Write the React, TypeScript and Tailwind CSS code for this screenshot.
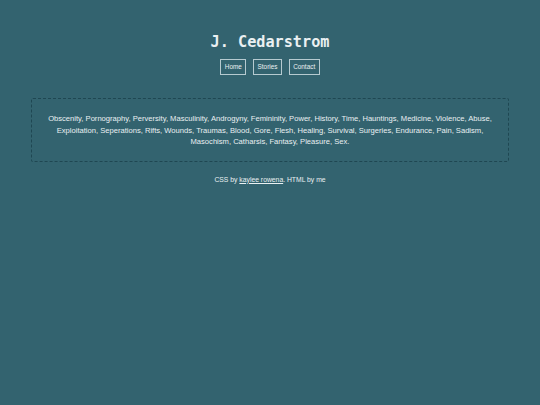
import React from 'react';

const links = ['Home', 'Stories', 'Contact'];

const tags =
  'Obscenity, Pornography, Perversity, Masculinity, Androgyny, Femininity, Power, History, Time, Hauntings, Medicine, Violence, Abuse, Exploitation, Seperations, Rifts, Wounds, Traumas, Blood, Gore, Flesh, Healing, Survival, Surgeries, Endurance, Pain, Sadism, Masochism, Catharsis, Fantasy, Pleasure, Sex.';

export default function App() {
  return (
    <div className="min-h-[405px] w-full bg-[#33636f] text-[#eaf0f2] font-['Liberation_Sans',Arial,sans-serif]">
      <header className="flex flex-col items-center pt-[32px]">
        <h1 className="font-['DejaVu_Sans_Mono',monospace] font-bold text-[15.2px] leading-[20px] tracking-normal">
          J. Cedarstrom
        </h1>
        <nav className="flex gap-[6.5px] mt-[7px]">
          {links.map((l) => (
            <a
              key={l}
              href="#"
              className="border border-[#b6cad0] px-[3.6px] h-[16px] flex items-center text-[6.4px] leading-none"
            >
              {l}
            </a>
          ))}
        </nav>
      </header>

      <section className="mx-[31px] mt-[23px] border border-dashed border-[#1f4752] rounded-[2px] px-[14px] pt-[14px] pb-[13px]">
        <p className="text-center text-[7.6px] leading-[11.6px]">{tags}</p>
      </section>

      <footer className="text-center text-[6.8px] mt-[13px]">
        CSS by <a href="#" className="underline">kaylee rowena</a>. HTML by me
      </footer>
    </div>
  );
}
